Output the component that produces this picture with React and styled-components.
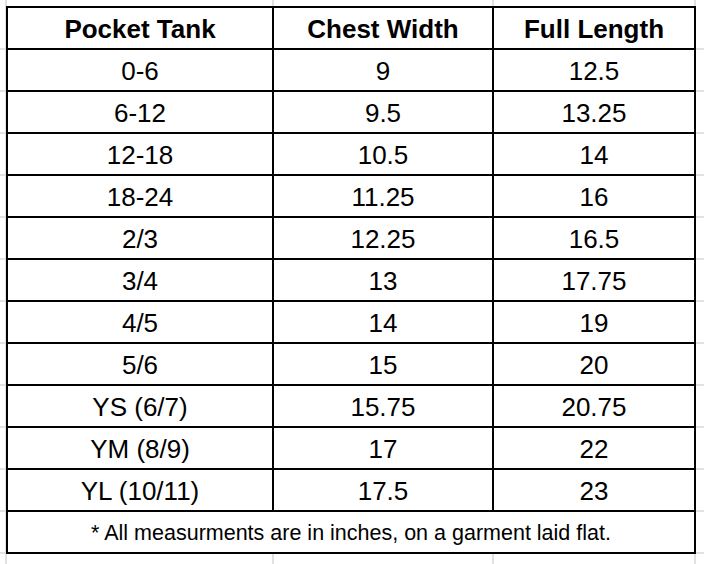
import React from 'react';
import styled, { createGlobalStyle } from 'styled-components';

const rows = [
  ['0-6', '9', '12.5'],
  ['6-12', '9.5', '13.25'],
  ['12-18', '10.5', '14'],
  ['18-24', '11.25', '16'],
  ['2/3', '12.25', '16.5'],
  ['3/4', '13', '17.75'],
  ['4/5', '14', '19'],
  ['5/6', '15', '20'],
  ['YS (6/7)', '15.75', '20.75'],
  ['YM (8/9)', '17', '22'],
  ['YL (10/11)', '17.5', '23'],
];

const GlobalStyle = createGlobalStyle`
  html, body {
    margin: 0;
    padding: 0;
    background: #fff;
  }
  body {
    font-family: Arial, "Liberation Sans", sans-serif;
    color: #000;
  }
`;

// spreadsheet gridlines peeking out around the bordered range
const Sheet = styled.div`
  width: 704px;
  height: 564px;
  box-sizing: border-box;
  padding: 6px 0 0 6px;
  overflow: hidden;
  background-color: #fff;
  background-image:
    linear-gradient(to right,
      transparent 5px, #e1e1e1 5px, #e1e1e1 7px, transparent 7px,
      transparent 272px, #e1e1e1 272px, #e1e1e1 274px, transparent 274px,
      transparent 492px, #e1e1e1 492px, #e1e1e1 494px, transparent 494px,
      transparent 694px, #e1e1e1 694px, #e1e1e1 696px, transparent 696px),
    repeating-linear-gradient(to bottom,
      transparent 0, transparent 40px, #e1e1e1 40px, #e1e1e1 42px);
  background-position: 0 0, 0 8px;
`;

const Table = styled.div`
  display: grid;
  grid-template-columns: 264px 218px 200px;
  grid-auto-rows: 40px;
  gap: 2px;
  padding: 2px;
  width: max-content;
  background: #000;
`;

const Cell = styled.div`
  display: flex;
  align-items: center;
  justify-content: center;
  padding-top: 2px;
  background: #fff;
  font-size: 26px;
  font-weight: ${({ $head }) => ($head ? 700 : 400)};
  white-space: nowrap;
`;

const Note = styled(Cell)`
  grid-column: 1 / -1;
  font-size: 21.5px;
`;

export default function App() {
  return (
    <>
      <GlobalStyle />
      <Sheet>
        <Table>
          <Cell $head>Pocket Tank</Cell>
          <Cell $head>Chest Width</Cell>
          <Cell $head>Full Length</Cell>
          {rows.map(row =>
            row.map((value, i) => <Cell key={row[0] + i}>{value}</Cell>)
          )}
          <Note>* All measurments are in inches, on a garment laid flat.</Note>
        </Table>
      </Sheet>
    </>
  );
}
